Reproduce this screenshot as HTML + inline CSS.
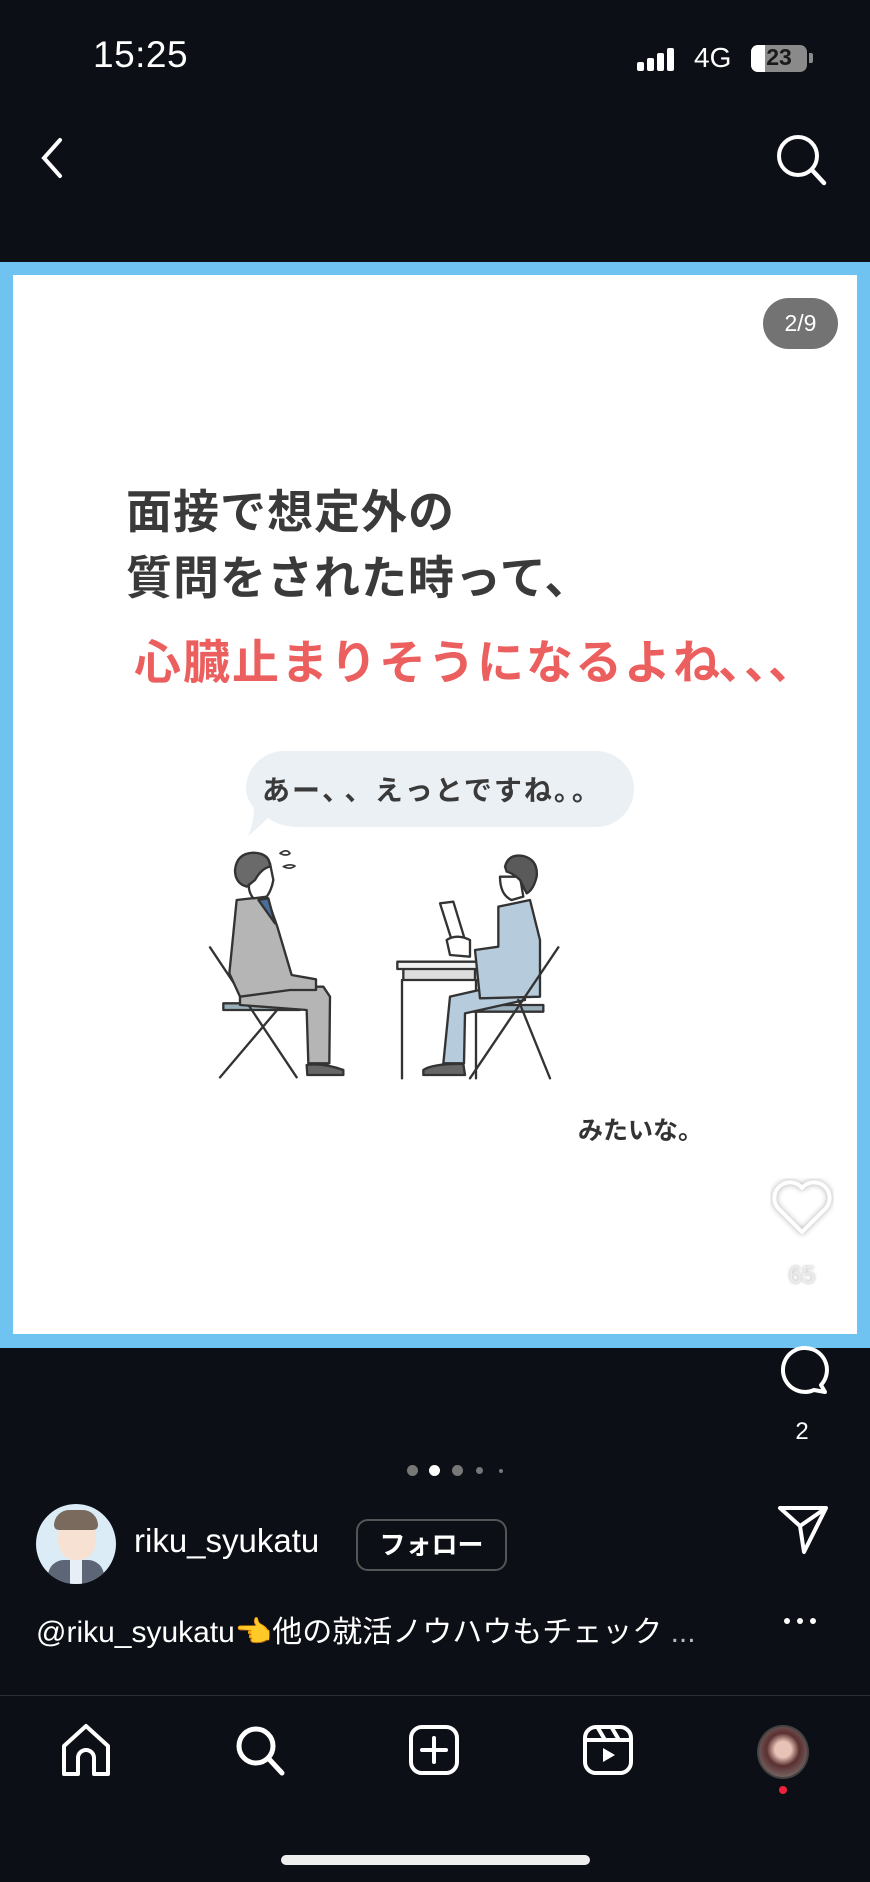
<!DOCTYPE html>
<html><head><meta charset="utf-8"><style>
*{margin:0;padding:0;box-sizing:border-box}
body{width:870px;height:1882px;background:#0c0f15;position:relative;overflow:hidden;font-family:"Liberation Sans","Noto Sans CJK JP",sans-serif;color:#fff}
.a{position:absolute}
.jp{font-family:"Noto Sans CJK JP",sans-serif}
.rc{position:absolute;top:624px;font-size:47px;font-weight:bold;color:#ec5f5f;font-family:"Noto Sans CJK JP",sans-serif}
</style></head><body>
<div class="a" style="left:93px;top:34px;font-size:37px;font-weight:500;letter-spacing:0.5px">15:25</div>
<div class="a" style="left:637px;top:48px;width:44px;height:24px">
 <div class="a" style="left:0;top:14px;width:7px;height:9px;background:#fff;border-radius:2px"></div>
 <div class="a" style="left:10px;top:10px;width:7px;height:13px;background:#fff;border-radius:2px"></div>
 <div class="a" style="left:20px;top:5px;width:7px;height:18px;background:#fff;border-radius:2px"></div>
 <div class="a" style="left:30px;top:0;width:7px;height:23px;background:#fff;border-radius:2px"></div>
</div>
<div class="a" style="left:694px;top:42px;font-size:28px">4G</div>
<div class="a" style="left:751px;top:45px;width:56px;height:27px;background:#8a8a8a;border-radius:7px;overflow:hidden"><div style="width:14px;height:27px;background:#fff"></div></div>
<div class="a" style="left:751px;top:44px;width:56px;text-align:center;font-size:23px;font-weight:bold;color:#1a1a1a">23</div>
<div class="a" style="left:809px;top:53px;width:4px;height:10px;background:#8a8a8a;border-radius:0 2px 2px 0"></div>
<svg class="a" style="left:36px;top:136px" width="30" height="44"><path d="M24 4 L8 22 L24 40" fill="none" stroke="#fff" stroke-width="4" stroke-linecap="round"/></svg>
<svg class="a" style="left:772px;top:130px" width="56" height="56"><circle cx="26" cy="26" r="19" fill="none" stroke="#fff" stroke-width="4"/><path d="M40 40 L52 53" stroke="#fff" stroke-width="4.5" stroke-linecap="round"/></svg>

<div class="a" style="left:0;top:262px;width:870px;height:1086px;background:#6fc3f1"></div>
<div class="a" style="left:13px;top:275px;width:844px;height:1059px;background:#fff"></div>
<div class="a" style="left:763px;top:298px;width:75px;height:51px;background:#737373;border-radius:26px;text-align:center;line-height:51px;font-size:23px;color:#fff">2/9</div>

<div class="a jp" style="left:126px;top:476px;font-size:46px;font-weight:bold;color:#3a3a3a;line-height:66px;letter-spacing:1px">面接で想定外の<br>質問をされた時って、</div>
<div class="a jp" style="left:134px;top:624px;font-size:47px;font-weight:bold;color:#ec5f5f;letter-spacing:2px;white-space:nowrap">心臓止まりそうになるよね</div>
<div class="rc" style="left:718px">、</div>
<div class="rc" style="left:744px">、</div>
<div class="rc" style="left:768px">、</div>

<svg class="a" style="left:240px;top:748px" width="400" height="90"><path d="M44 3 H356 A38 38 0 0 1 356 79 H60 Q40 79 28 70 Q18 80 8 88 Q14 74 14 60 Q6 50 6 41 A38 38 0 0 1 44 3 Z" fill="#eaf0f4"/></svg>
<div class="a jp" style="left:262px;top:769px;font-size:28px;font-weight:bold;color:#3a3a3a;letter-spacing:2px;white-space:nowrap">あー<span style="letter-spacing:-6px">、 、</span> えっとですね<span style="letter-spacing:4px">。。</span></div>

<svg class="a" style="left:190px;top:840px" width="380" height="250" viewBox="0 0 1140 750">
<g stroke="#333" stroke-width="7" stroke-linejoin="round" stroke-linecap="round">
<path d="M270 40 Q290 25 300 40 Q290 50 270 40Z M280 80 Q300 70 315 78 Q300 90 280 80Z" fill="#fff" stroke-width="5"/>
<rect x="100" y="490" width="230" height="20" fill="#9bb0bd"/>
<line x1="60" y1="322" x2="320" y2="712"/><line x1="270" y1="500" x2="90" y2="712"/>
<path d="M150 440 L400 440 L420 470 L418 670 L355 670 L350 510 L150 495 Z" fill="#b5b5b5"/>
<path d="M140 180 L230 170 L262 260 L305 405 L378 418 L378 450 L300 450 L150 470 L118 400 Z" fill="#b5b5b5"/>
<path d="M205 180 L235 175 L255 250 Z" fill="#4a6d9a"/>
<path d="M180 120 Q170 150 190 175 L230 170 Q245 150 250 120 L240 70 Z" fill="#fff"/>
<path d="M135 90 Q140 40 190 38 Q240 40 240 80 Q215 85 195 120 L170 140 Q135 130 135 90Z" fill="#6a6a6a"/>
<path d="M350 675 Q400 668 460 690 L460 705 L352 705 Z" fill="#666"/>
<rect x="850" y="495" width="210" height="20" fill="#9bb0bd"/>
<path d="M640 385 H855 V420 H640 Z" fill="#ddd"/>
<rect x="622" y="365" width="252" height="22" fill="#f2f2f2"/>
<line x1="636" y1="420" x2="636" y2="715"/><line x1="858" y1="420" x2="858" y2="715"/>
<path d="M780 470 L1000 420 L1005 480 L825 520 L822 670 L760 670 Z" fill="#b6cbdb"/>
<path d="M925 200 L1020 180 L1050 300 L1050 470 L870 475 L855 330 L925 320 Z" fill="#b6cbdb"/>
<path d="M750 190 L790 185 L822 290 L785 300 Z" fill="#fff"/>
<path d="M770 300 Q800 280 840 300 L840 350 L780 345 Z" fill="#fff"/>
<line x1="1105" y1="322" x2="840" y2="715"/><line x1="985" y1="480" x2="1080" y2="715"/>
<path d="M930 110 Q930 165 965 180 L1000 170 L990 110 Z" fill="#fff"/>
<path d="M945 80 Q955 40 1000 48 Q1045 60 1040 110 Q1030 150 1010 160 L990 120 Q970 100 950 95 Z" fill="#5a5a5a"/>
<path d="M700 690 Q730 670 820 672 L825 705 L700 705 Z" fill="#666"/>
</g></svg>

<div class="a jp" style="left:578px;top:1111px;font-size:25px;font-weight:bold;color:#333">みたいな。</div>

<svg class="a" style="left:770px;top:1178px" width="64" height="60"><path d="M32 54 L8 30 A13 13 0 0 1 32 10 A13 13 0 0 1 56 30 Z" fill="none" stroke="#fff" stroke-width="4" stroke-linejoin="round" style="filter:drop-shadow(0 0 3px rgba(0,0,0,.35))"/></svg>
<div class="a" style="left:770px;top:1262px;width:64px;text-align:center;font-size:24px;color:#ececec;text-shadow:0 0 3px rgba(0,0,0,.35)">65</div>
<svg class="a" style="left:774px;top:1342px" width="58" height="56"><path d="M47 43 A22 22 0 1 0 40 48 L51 50 Z" fill="none" stroke="#fff" stroke-width="4" stroke-linejoin="round"/></svg>
<div class="a" style="left:772px;top:1418px;width:60px;text-align:center;font-size:24px">2</div>

<div class="a" style="left:407px;top:1465px;width:11px;height:11px;border-radius:50%;background:#777"></div>
<div class="a" style="left:429px;top:1465px;width:11px;height:11px;border-radius:50%;background:#fff"></div>
<div class="a" style="left:452px;top:1465px;width:11px;height:11px;border-radius:50%;background:#777"></div>
<div class="a" style="left:476px;top:1467px;width:7px;height:7px;border-radius:50%;background:#777"></div>
<div class="a" style="left:499px;top:1469px;width:4px;height:4px;border-radius:50%;background:#777"></div>

<div class="a" style="left:36px;top:1504px;width:80px;height:80px;border-radius:50%;background:#dcecf6;overflow:hidden">
 <div class="a" style="left:22px;top:12px;width:38px;height:44px;border-radius:45%;background:#f6e1d2"></div>
 <div class="a" style="left:18px;top:6px;width:44px;height:20px;border-radius:20px 20px 6px 6px;background:#7a6a5e"></div>
 <div class="a" style="left:12px;top:56px;width:56px;height:30px;border-radius:16px 16px 0 0;background:#5d6676"></div>
 <div class="a" style="left:34px;top:56px;width:12px;height:26px;background:#e8eef5"></div>
</div>
<div class="a" style="left:134px;top:1522px;font-size:33px">riku_syukatu</div>
<div class="a jp" style="left:356px;top:1519px;width:151px;height:52px;border:2px solid #555;border-radius:12px;text-align:center;line-height:46px;font-size:26px;font-weight:bold">フォロー</div>
<svg class="a" style="left:774px;top:1500px" width="58" height="56"><path d="M6 8 L52 8 L30 52 L26 26 Z M26 26 L52 8" fill="none" stroke="#fff" stroke-width="4" stroke-linejoin="round"/></svg>
<div class="a" style="left:36px;top:1607px;font-size:30px;white-space:nowrap">@riku_syukatu<span class="jp">👈</span><span class="jp" style="font-size:30px">他の就活ノウハウもチェック</span> <span style="color:#bbb">...</span></div>
<div class="a" style="left:784px;top:1618px;width:6px;height:6px;border-radius:50%;background:#fff;box-shadow:13px 0 #fff,26px 0 #fff"></div>

<div class="a" style="left:0;top:1695px;width:870px;height:1px;background:#2a2d33"></div>
<svg class="a" style="left:58px;top:1722px" width="56" height="56"><path d="M6 52 V24 L28 4 L50 24 V52 H36 V36 A8 8 0 0 0 20 36 V52 Z" fill="none" stroke="#fff" stroke-width="4" stroke-linejoin="round"/></svg>
<svg class="a" style="left:232px;top:1722px" width="56" height="56"><circle cx="24" cy="24" r="17" fill="none" stroke="#fff" stroke-width="5"/><path d="M37 37 L50 51" stroke="#fff" stroke-width="5" stroke-linecap="round"/></svg>
<svg class="a" style="left:406px;top:1722px" width="56" height="56"><rect x="5" y="5" width="46" height="46" rx="11" fill="none" stroke="#fff" stroke-width="4"/><path d="M28 16 V40 M16 28 H40" stroke="#fff" stroke-width="4" stroke-linecap="round"/></svg>
<svg class="a" style="left:580px;top:1722px" width="56" height="56"><rect x="5" y="5" width="46" height="46" rx="11" fill="none" stroke="#fff" stroke-width="4"/><path d="M5 18 H51 M18 6 L25 18 M32 6 L39 18" stroke="#fff" stroke-width="4"/><path d="M23 26 L35 33 L23 40 Z" fill="#fff"/></svg>
<div class="a" style="left:757px;top:1725px;width:52px;height:54px;border-radius:50%;background:radial-gradient(circle at 50% 45%,#e7c2b6 0 22%,#5a3030 45%,#7a6a6a 80%);border:2px solid #444"></div>
<div class="a" style="left:779px;top:1786px;width:8px;height:8px;border-radius:50%;background:#f0213c"></div>
<div class="a" style="left:281px;top:1855px;width:309px;height:10px;border-radius:5px;background:#eee"></div>
</body></html>
